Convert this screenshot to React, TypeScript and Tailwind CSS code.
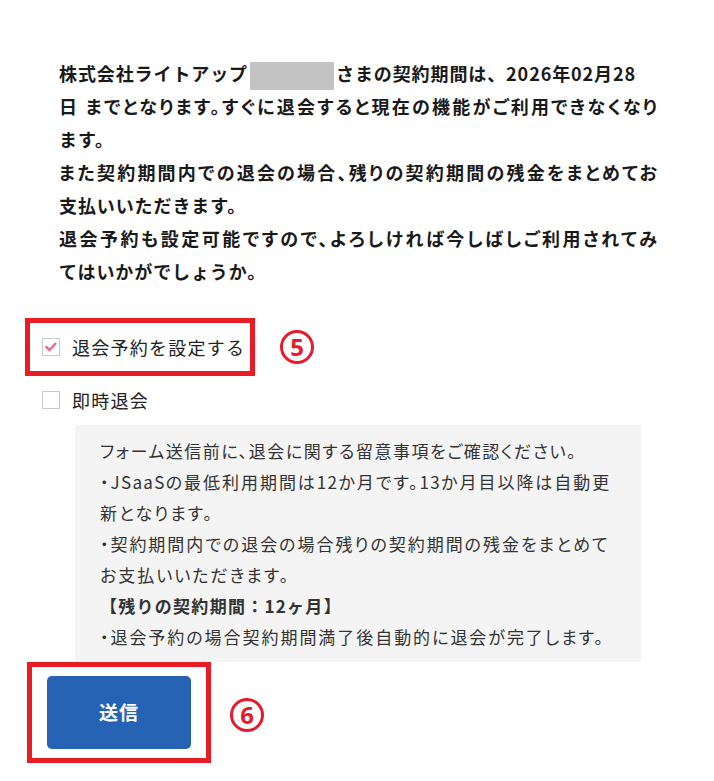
import React from "react";

function Check({ checked }: { checked?: boolean }) {
  return (
    <span className="flex h-[18px] w-[18px] shrink-0 items-center justify-center border border-[#c9c9c9] bg-white">
      {checked && (
        <svg width="14" height="14" viewBox="0 0 14 14">
          <path d="M2.5 7.2 L5.6 10 L11.2 3.8" fill="none" stroke="#e6709b" strokeWidth="2.6" strokeLinecap="round" strokeLinejoin="round" />
        </svg>
      )}
    </span>
  );
}

function Num({ n }: { n: string }) {
  return (
    <span className="flex h-[34px] w-[34px] shrink-0 items-center justify-center rounded-full border-[3px] border-[#e8192c] font-['Open_Sans',sans-serif] text-[24px] font-bold leading-none text-[#e8192c]">
      {n}
    </span>
  );
}

export default function App() {
  const just = "[text-align:justify] [text-align-last:justify] [font-feature-settings:'palt']";
  const nat = "tracking-[0.05em]";
  const note = "whitespace-nowrap tracking-[0.115em] [font-feature-settings:'palt']";
  return (
    <div className="min-h-[781px] w-[714px] bg-white font-['Noto_Sans_CJK_JP','Noto_Sans_CJK_SC',sans-serif] text-[#1a1a1a]">
      <div className="flex flex-col">
        {/* main paragraph */}
        <div className="ml-[59px] mt-[57px] w-[598px] text-[18px] font-bold leading-[33px]">
          <div className={nat}>
            株式会社ライトアップ
            <span className="mx-[2px] inline-block h-[28px] w-[84px] bg-[#c3c3c3] align-middle" />
            さまの契約期間は、2026年02月28
          </div>
          <div className={just}>日 までとなります。すぐに退会すると現在の機能がご利用できなくなり</div>
          <div className={nat}>ます。</div>
          <div className={just}>また契約期間内での退会の場合、残りの契約期間の残金をまとめてお</div>
          <div className={nat}>支払いいただきます。</div>
          <div className={just}>退会予約も設定可能ですので、よろしければ今しばしご利用されてみ</div>
          <div className={nat}>てはいかがでしょうか。</div>
        </div>

        {/* option 1 with annotation */}
        <div className="ml-[25px] mt-[30px] flex items-center">
          <label className="flex h-[58px] w-[230px] items-center gap-[12px] border-[5px] border-[#e81c24] pl-[12px]">
            <Check checked />
            <span className="text-[18px] leading-none tracking-[0.07em] text-[#222]">退会予約を設定する</span>
          </label>
          <span className="ml-[25px]">
            <Num n="5" />
          </span>
        </div>

        {/* option 2 */}
        <label className="ml-[42px] mt-[15px] flex h-[18px] items-center gap-[12px]">
          <Check />
          <span className="text-[18px] leading-none tracking-[0.07em] text-[#222]">即時退会</span>
        </label>

        {/* notice */}
        <div className="ml-[75px] mt-[16px] w-[566px] bg-[#f4f4f4] pb-[10px] pl-[25px] pr-[10px] pt-[10px] text-[17px] leading-[31px] text-[#333]">
          <div className="whitespace-nowrap tracking-[0.09em] [font-feature-settings:'palt']">フォーム送信前に、退会に関する留意事項をご確認ください。</div>
          <div className={note}>
            ・<span className="tracking-[0.08em]">JSaaS</span>の最低利用期間は<span className="tracking-[0.08em]">12</span>か月です。<span className="tracking-[0.08em]">13</span>か月目以降は自動更
          </div>
          <div className={note}>新となります。</div>
          <div className={note}>・契約期間内での退会の場合残りの契約期間の残金をまとめて</div>
          <div className={note}>お支払いいただきます。</div>
          <div className="whitespace-nowrap font-bold tracking-[0.075em]">【残りの契約期間：12ヶ月】</div>
          <div className={note}>・退会予約の場合契約期間満了後自動的に退会が完了します。</div>
        </div>

        {/* submit with annotation */}
        <div className="ml-[27px] flex items-center">
          <div className="border-[5px] border-[#e81c24] px-[15px] py-[9px]">
            <button className="flex h-[73px] w-[144px] items-center justify-center rounded-[5px] bg-[#2763b4] text-[19px] font-bold tracking-[0.05em] text-white">
              送信
            </button>
          </div>
          <span className="ml-[19px] mt-[4px]">
            <Num n="6" />
          </span>
        </div>
      </div>
    </div>
  );
}
